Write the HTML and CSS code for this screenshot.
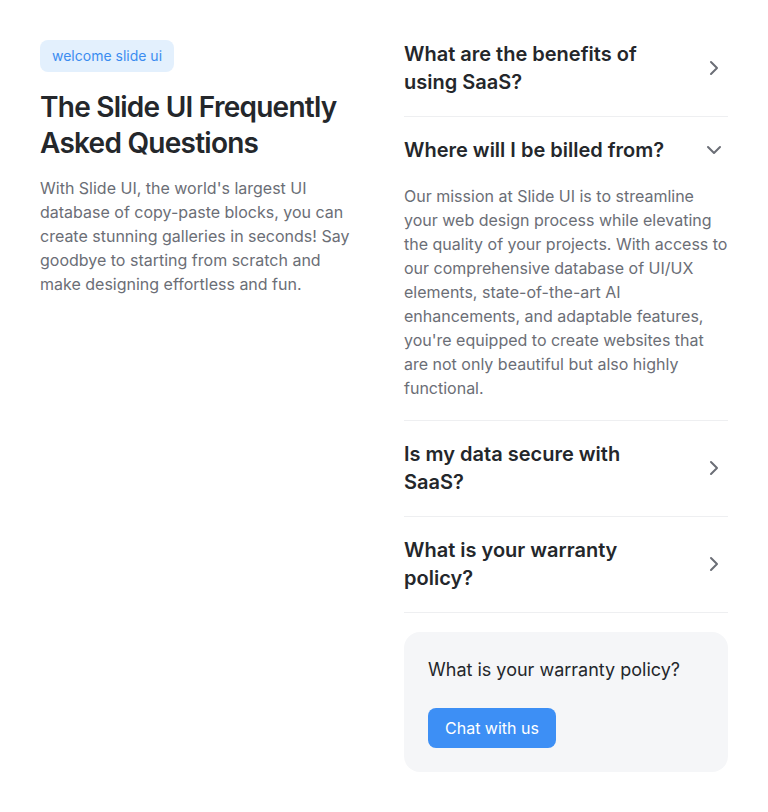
FILE: index.html
```html
<!DOCTYPE html>
<html lang="en">
<head>
<meta charset="utf-8">
<title>FAQ</title>
<link rel="stylesheet" href="styles.css">
</head>
<body>
<main class="faq">
  <section class="intro">
    <span class="badge">welcome slide ui</span>
    <h1 class="title">The Slide UI Frequently Asked Questions</h1>
    <p class="lead">With Slide UI, the world's largest UI database of copy-paste blocks, you can create stunning galleries in seconds! Say goodbye to starting from scratch and make designing effortless and fun.</p>
  </section>
  <section class="list">
    <div class="item">
      <div class="q">
        <h3 class="q-text">What are the benefits of using SaaS?</h3>
        <svg class="chev" viewBox="0 0 24 24" width="24" height="24"><path d="M9 6l6 6-6 6"/></svg>
      </div>
    </div>
    <div class="item">
      <div class="q">
        <h3 class="q-text">Where will I be billed from?</h3>
        <svg class="chev" viewBox="0 0 24 24" width="24" height="24"><path d="M6 9l6 6 6-6"/></svg>
      </div>
      <p class="answer">Our mission at Slide UI is to streamline your web design process while elevating the quality of your projects. With access to our comprehensive database of UI/UX elements, state-of-the-art AI enhancements, and adaptable features, you're equipped to create websites that are not only beautiful but also highly functional.</p>
    </div>
    <div class="item">
      <div class="q">
        <h3 class="q-text">Is my data secure with SaaS?</h3>
        <svg class="chev" viewBox="0 0 24 24" width="24" height="24"><path d="M9 6l6 6-6 6"/></svg>
      </div>
    </div>
    <div class="item">
      <div class="q">
        <h3 class="q-text">What is your warranty policy?</h3>
        <svg class="chev" viewBox="0 0 24 24" width="24" height="24"><path d="M9 6l6 6-6 6"/></svg>
      </div>
    </div>
    <div class="card">
      <p class="card-text">What is your warranty policy?</p>
      <button class="btn" type="button">Chat with us</button>
    </div>
  </section>
</main>
</body>
</html>
```

FILE: styles.css
```css
* { box-sizing: border-box; }
html, body { margin: 0; padding: 0; background: #ffffff; }
body {
  font-family: Inter, "Noto Sans", "Liberation Sans", sans-serif;
  color: #1f2328;
  padding: 40px;
}
.faq {
  display: grid;
  grid-template-columns: 1fr 1fr;
  column-gap: 40px;
  align-items: start;
}
.intro {
  display: flex;
  flex-direction: column;
  align-items: flex-start;
}
.badge {
  display: inline-block;
  height: 32px;
  line-height: 32px;
  padding: 0 12px;
  border-radius: 8px;
  background: #e3f0fd;
  color: #3b8cf0;
  font-size: 14px;
}
.title {
  margin: 17px 0 0;
  font-size: 28px;
  line-height: 36px;
  font-weight: 600;
  letter-spacing: -0.75px;
  color: #24272b;
}
.lead {
  margin: 15px 0 0;
  font-size: 16px;
  line-height: 24px;
  color: #6b6e76;
}
.list {
  display: flex;
  flex-direction: column;
}
.item {
  padding: 19px 0 20px;
  border-bottom: 1px solid #eeeff1;
}
.item:first-child { padding-top: 0; }
.q {
  display: flex;
  align-items: center;
  justify-content: space-between;
  gap: 24px;
}
.q-text {
  margin: 0;
  font-size: 20px;
  line-height: 28px;
  font-weight: 600;
  color: #24272b;
  max-width: 240px;
}
.item:nth-child(2) .q-text { max-width: none; }
.chev {
  flex: none;
  margin-right: 2px;
  fill: none;
  stroke: #6b6e76;
  stroke-width: 2;
  stroke-linecap: round;
  stroke-linejoin: round;
}
.answer {
  margin: 20px 0 0;
  font-size: 16px;
  line-height: 24px;
  color: #6b6e76;
}
.card {
  margin-top: 19px;
  padding: 24px;
  border-radius: 16px;
  background: #f5f6f8;
  display: flex;
  flex-direction: column;
  align-items: flex-start;
  gap: 24px;
}
.card-text {
  margin: 0;
  font-size: 18px;
  line-height: 28px;
  color: #24272b;
}
.btn {
  height: 40px;
  padding: 0 17px;
  border: 0;
  border-radius: 8px;
  background: #3d8ff5;
  color: #ffffff;
  font-family: inherit;
  font-size: 16px;
  cursor: pointer;
}
```
